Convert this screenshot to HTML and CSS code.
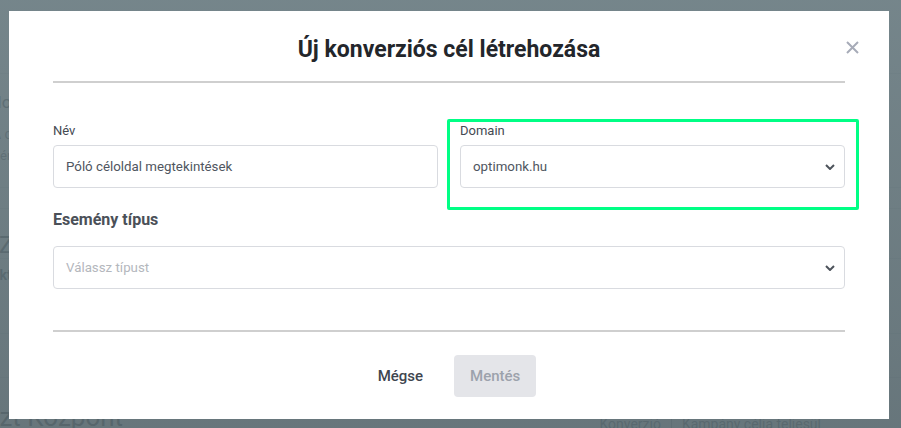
FILE: index.html
```html
<!DOCTYPE html>
<html lang="hu">
<head>
    <meta charset="UTF-8">
    <title>Új konverziós cél</title>
    <link rel="stylesheet" href="styles.css">
</head>
<body>
<div class="page">
    <div class="bg">
        <div class="bg-top"></div>
        <div class="bg-intro">
            <div class="bg-title">Konverziós célok</div>
            <div class="bg-text">A célok segítségével mérheted a kampányaid eredményét.</div>
            <div class="bg-text small">Kérjük, add meg a cél nevét.</div>
        </div>
        <div class="bg-row"></div>
        <div class="bg-big">Zárt célok</div>
        <div class="bg-head"><span class="bold">Aktív</span><span class="bold right">Aktiválás</span></div>
        <div class="bg-row tall"></div>
        <div class="bg-row tall"></div>
        <div class="bg-foot">
            <span class="bg-big2">Teszt Központ</span>
            <span class="bg-crumb">Konverzió <i></i> Kampány célja teljesül</span>
        </div>
    </div>
    <div class="overlay"></div>

    <div class="modal">
        <div class="modal-head">
            <h1>Új konverziós cél létrehozása</h1>
            <span class="close">
                <svg width="13" height="13" viewBox="0 0 13 13"><path d="M1 1L12 12M12 1L1 12" stroke="#a7abb8" stroke-width="2" fill="none"/></svg>
            </span>
        </div>

        <div class="form">
            <div class="cols">
                <div class="field">
                    <label>Név</label>
                    <div class="input">Póló céloldal megtekintések</div>
                </div>
                <div class="field">
                    <div class="highlight"></div>
                    <label>Domain</label>
                    <div class="input select">optimonk.hu
                        <svg class="chev" width="10" height="6" viewBox="0 0 10 6"><path d="M1 1L5 5L9 1" stroke="#4d535b" stroke-width="2" fill="none"/></svg>
                    </div>
                </div>
            </div>

            <div class="section">Esemény típus</div>
            <div class="input select placeholder">Válassz típust
                <svg class="chev" width="10" height="6" viewBox="0 0 10 6"><path d="M1 1L5 5L9 1" stroke="#4d535b" stroke-width="2" fill="none"/></svg>
            </div>
        </div>

        <div class="modal-foot">
            <span class="btn link">Mégse</span>
            <span class="btn disabled">Mentés</span>
        </div>
    </div>
</div>
</body>
</html>
```

FILE: styles.css
```css
body {
    margin: 0;
    padding: 0;
    font-family: Roboto, "Liberation Sans", sans-serif;
}

.page {
    width: 901px;
    height: 428px;
    overflow: hidden;
    position: relative;
    background: #fff;
}

/* background page */
.bg {
    color: #2b2f35;
}

.bg-top {
    height: 73px;
    border-bottom: 1px solid #dfe2e6;
}

.bg-intro {
    height: 113px;
    padding-top: 18px;
    box-sizing: border-box;
    margin-left: -8px;
}

.bg-title {
    font-size: 17px;
    margin-left: -100px;
}

.bg-text {
    font-size: 14px;
    margin-top: 14px;
    color: #4d535b;
}

.bg-text.small {
    margin-top: 6px;
    font-size: 13px;
}

.bg-row {
    height: 20px;
    border-top: 1px solid #dfe2e6;
    border-bottom: 1px solid #dfe2e6;
}

.bg-row.tall {
    height: 33px;
    border-top: 0;
    margin-top: 10px;
}

.bg-big {
    font-size: 24px;
    height: 50px;
    padding-top: 22px;
    box-sizing: border-box;
    margin-left: -1px;
    border-bottom: 1px solid #dfe2e6;
}

.bg-head {
    display: flex;
    justify-content: space-between;
    font-size: 14px;
    height: 31px;
    padding-top: 8px;
    box-sizing: border-box;
    margin-left: -10px;
    margin-right: -60px;
}

.bold {
    font-weight: bold;
}

.bg-foot {
    display: flex;
    align-items: flex-end;
    justify-content: space-between;
    padding: 24px 80px 0 0;
    margin-left: -42px;
}

.bg-big2 {
    font-size: 26px;
}

.bg-crumb {
    font-size: 14px;
    color: #4d535b;
    display: flex;
    align-items: center;
    gap: 10px;
}

.bg-crumb i {
    width: 1px;
    height: 14px;
    background: #9aa0a8;
}

.overlay {
    position: absolute;
    left: 0;
    top: 0;
    right: 0;
    bottom: 0;
    background: linear-gradient(rgba(102, 120, 126, 0.9), rgba(90, 106, 112, 0.92));
}

/* modal */
.modal {
    position: absolute;
    left: 9px;
    top: 11px;
    width: 880px;
    height: 408px;
    background: #fff;
    padding: 0 44px;
    box-sizing: border-box;
}

.modal-head {
    padding: 26px 0 18px;
    border-bottom: 2px solid #cfcfcf;
    text-align: center;
}

.modal-head h1 {
    margin: 0;
    font-size: 23px;
    line-height: 26px;
    font-weight: bold;
    color: #23262b;
}

.close {
    position: absolute;
    right: 30px;
    top: 30px;
    width: 13px;
    height: 13px;
    display: flex;
}

.form {
    padding-top: 40px;
}

.cols {
    display: grid;
    grid-template-columns: 1fr 1fr;
    gap: 22px;
}

.field {
    position: relative;
}

.field label {
    display: block;
    font-size: 13px;
    line-height: 16px;
    color: #454a52;
    margin-bottom: 6px;
}

.highlight {
    position: absolute;
    left: -13px;
    right: -14px;
    top: -4px;
    bottom: -22px;
    border: 3px solid #00ff85;
    border-radius: 2px;
}

.input {
    height: 43px;
    box-sizing: border-box;
    border: 1px solid #d9dbe0;
    border-radius: 4px;
    padding: 0 12px;
    display: flex;
    align-items: center;
    font-size: 13.3px;
    color: #4f5660;
    background: #fff;
}

.select {
    justify-content: space-between;
    padding-right: 9px;
}

.placeholder {
    color: #b4b7bd;
}

.section {
    margin: 22px 0 17px;
    font-size: 16px;
    line-height: 19px;
    font-weight: bold;
    color: #4b5058;
}

.modal-foot {
    margin-top: 41px;
    border-top: 2px solid #cfcfcf;
    padding-top: 23px;
    display: flex;
    justify-content: center;
    gap: 15px;
}

.btn {
    height: 42px;
    padding: 0 16px;
    border-radius: 4px;
    display: flex;
    align-items: center;
    font-size: 15px;
    font-weight: 500;
}

.btn.link {
    color: #3f4650;
}

.btn.disabled {
    background: #e4e5e9;
    color: #9ca2ac;
}
```
